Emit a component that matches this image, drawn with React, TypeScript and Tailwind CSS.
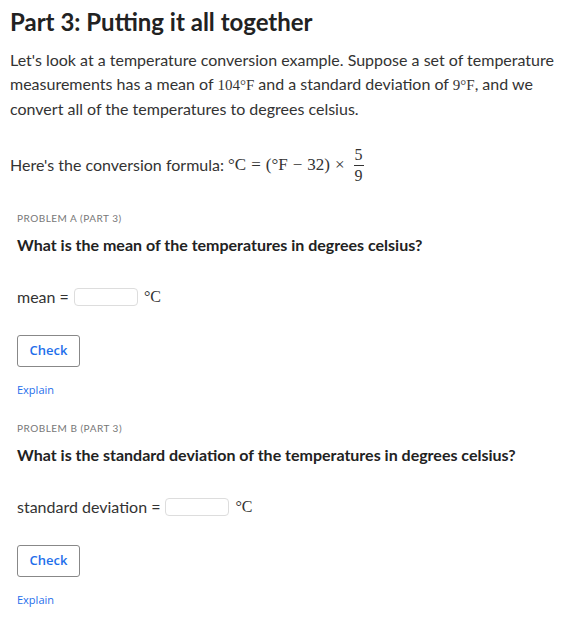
import React from 'react';

const serif = "font-['Liberation_Serif','DejaVu_Serif',serif]";

function Problem({ label, question, field }: { label: string; question: string; field: string }) {
  return (
    <div className="px-[17px]">
      <p className="text-[10px] uppercase tracking-[0.05em] text-[#777] leading-[12px]">{label}</p>
      <h3 className="mt-[10px] text-[16px] font-bold text-[#222] leading-[22px]">{question}</h3>
      <div className="mt-[31px] flex items-center text-[16px] text-[#333] leading-[20px] h-[20px]">
        <span>{field} =</span>
        <input
          className="ml-[5px] w-[64px] h-[18px] rounded-[4px] border border-[#ddd] outline-none"
          aria-label={field}
        />
        <span className={`ml-[6px] text-[16px] ${serif}`}>°C</span>
      </div>
      <button className="mt-[28px] w-[63px] h-[32px] rounded-[3px] border border-[#888] bg-white text-[13px] font-semibold text-[#1f6feb] font-['Open_Sans',sans-serif]">
        Check
      </button>
      <p className="mt-[15px] text-[11px] text-[#1f6feb] font-['Open_Sans',sans-serif] leading-[16px]">Explain</p>
    </div>
  );
}

export default function App() {
  return (
    <div className="w-[583px] h-[618px] overflow-hidden bg-white font-['Lato',sans-serif] text-[#333]">
      <div className="px-[10px] pt-[6px]">
        <h1 className="text-[24px] font-bold text-[#222] leading-[32px]">Part 3: Putting it all together</h1>
        <p className="mt-[10px] text-[16px] leading-[24px]">
          Let's look at a temperature conversion example. Suppose a set of temperature measurements has a mean of{' '}
          <span className={`${serif} text-[15px]`}>104°F</span> and a standard deviation of{' '}
          <span className={`${serif} text-[15px]`}>9°F</span>, and we convert all of the temperatures to degrees celsius.
        </p>
        <div className="mt-[24px] flex items-center text-[16px] h-[40px]">
          <span>Here's the conversion formula:&nbsp;</span>
          <span className={`${serif} text-[17px] flex items-center`}>
            <span>°C</span>
            <span className="mx-[5px]">=</span>
            <span>(°F</span>
            <span className="mx-[5px]">−</span>
            <span>32)</span>
            <span className="mx-[5px]">×</span>
            <span className="ml-[4px] inline-flex flex-col items-center text-[16px] leading-[16px]">
              <span>5</span>
              <span className="w-[10px] my-[2px] border-t border-[#333]" />
              <span>9</span>
            </span>
          </span>
        </div>
      </div>
      <div className="mt-[27px]">
        <Problem label="Problem A (Part 3)" question="What is the mean of the temperatures in degrees celsius?" field="mean" />
      </div>
      <div className="mt-[24px]">
        <Problem
          label="Problem B (Part 3)"
          question="What is the standard deviation of the temperatures in degrees celsius?"
          field="standard deviation"
        />
      </div>
    </div>
  );
}
